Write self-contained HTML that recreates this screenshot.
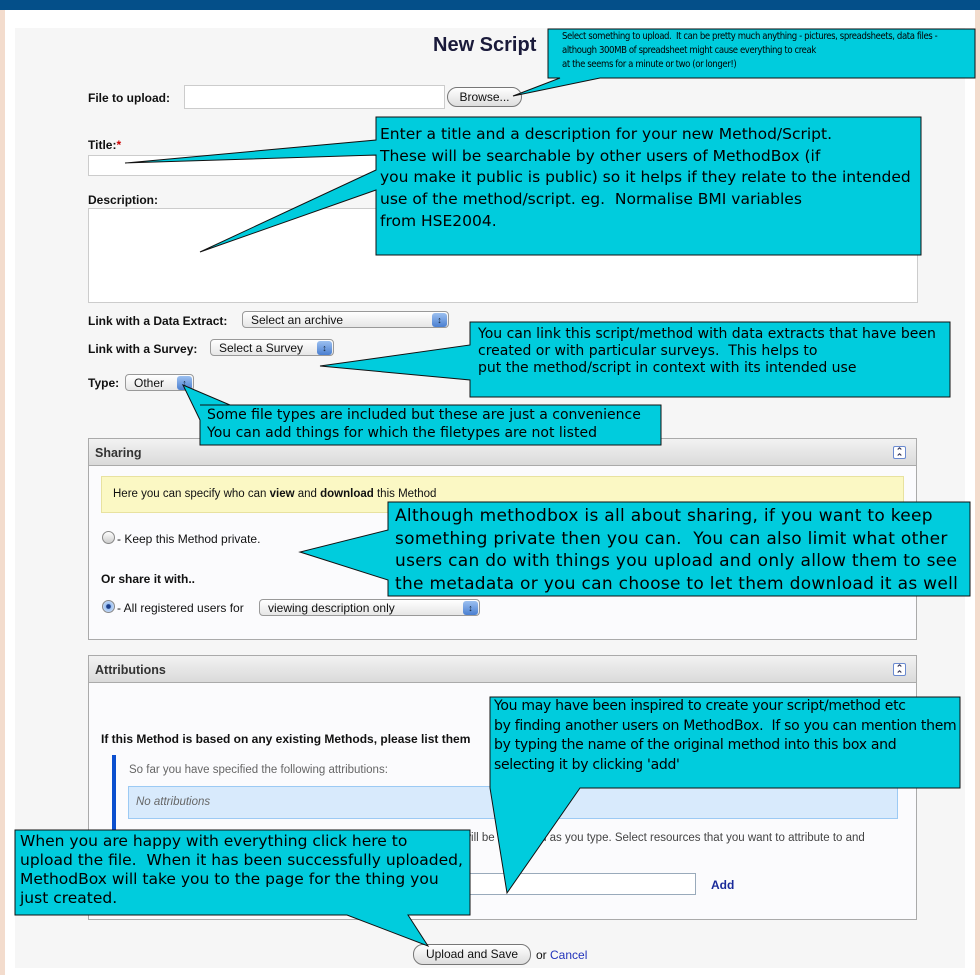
<!DOCTYPE html>
<html><head><meta charset="utf-8"><style>
*{margin:0;padding:0;box-sizing:border-box}
body{width:980px;height:975px;position:relative;overflow:hidden;background:#f3dccd;font-family:"Liberation Sans",Arial,sans-serif;font-size:12px;color:#111}
.a{position:absolute}
.inner{left:5px;top:0;width:970px;height:975px;background:#fff}
.bar{left:0;top:0;width:980px;height:10px;background:#044f89}
.page{left:15px;top:28px;width:950px;height:940px;background:#f6f6f6}
.lbl{font-weight:bold;font-size:12px}
.inp{background:#fff;border:1px solid #ccc}
.btn{border:1px solid #777;border-radius:10px;background:linear-gradient(#fff,#ddd);font-size:12px;text-align:center;line-height:18px}
.sel{border:1px solid #999;border-radius:4px;background:linear-gradient(#fff,#e6e6e6);font-size:12px;padding-left:8px;line-height:16px}
.sel:after{content:"\2195";position:absolute;right:1px;top:1px;width:15px;height:14px;background:linear-gradient(#9cc0f0,#4a7fd0);border-radius:3px;color:#123;font-size:9px;line-height:14px;text-align:center}
.panel{border:1px solid #aaa;background:#fbfbfd}
.ph{height:27px;background:linear-gradient(#f2f2f2,#dadada);border-bottom:1px solid #aaa;font-weight:bold;font-size:12.5px;color:#333;padding:7px 6px}
.tg{position:absolute;right:10px;top:7px;width:13px;height:13px;border:1px solid #6a8ad0;border-radius:2px;background:#fff;font-size:9px;line-height:6px;text-align:center;color:#335;padding-top:1px}
.radio{width:13px;height:13px;border-radius:50%;border:1px solid #888;background:linear-gradient(#fff,#ccc)}
.ct{font-family:"DejaVu Sans",sans-serif;color:#000}
</style></head><body>
<div class="a inner"></div>
<div class="a bar"></div>
<div class="a page"></div>

<div class="a" style="left:433px;top:34px;font-size:20px;font-weight:bold;color:#1a1a3a">New Script</div>

<div class="a lbl" style="left:88px;top:91px">File to upload:</div>
<div class="a inp" style="left:184px;top:85px;width:261px;height:24px"></div>
<div class="a btn" style="left:447px;top:87px;width:75px;height:20px">Browse...</div>

<div class="a lbl" style="left:88px;top:138px">Title:<span style="color:#c00">*</span></div>
<div class="a inp" style="left:88px;top:155px;width:830px;height:21px"></div>
<div class="a lbl" style="left:88px;top:193px">Description:</div>
<div class="a inp" style="left:88px;top:208px;width:830px;height:95px"></div>

<div class="a lbl" style="left:88px;top:314px">Link with a Data Extract:</div>
<div class="a sel" style="left:242px;top:311px;width:207px;height:17px">Select an archive</div>
<div class="a lbl" style="left:88px;top:342px">Link with a Survey:</div>
<div class="a sel" style="left:210px;top:339px;width:124px;height:17px">Select a Survey</div>
<div class="a lbl" style="left:88px;top:376px">Type:</div>
<div class="a sel" style="left:125px;top:374px;width:69px;height:17px">Other</div>

<div class="a panel" style="left:88px;top:438px;width:829px;height:202px">
 <div class="ph">Sharing<div class="tg">&#8963;<br>&#8963;</div></div>
 <div class="a" style="left:12px;top:37px;width:803px;height:37px;background:#fbf8c4;border:1px solid #e8e2a0;padding:11px 11px;font-size:11.5px">Here you can specify who can <b>view</b> and <b>download</b> this Method</div>
 <div class="a radio" style="left:13px;top:92px"></div>
 <div class="a" style="left:28px;top:93px;font-size:12px">- Keep this Method private.</div>
 <div class="a lbl" style="left:12px;top:133px">Or share it with..</div>
 <div class="a radio" style="left:13px;top:161px;background:radial-gradient(#1a3d8a 25%,#9cc0f0 35%,#e0ebfb)"></div>
 <div class="a" style="left:28px;top:162px;font-size:12px">- All registered users for</div>
 <div class="a sel" style="left:170px;top:160px;width:221px;height:17px">viewing description only</div>
</div>

<div class="a panel" style="left:88px;top:655px;width:829px;height:265px">
 <div class="ph">Attributions<div class="tg">&#8963;<br>&#8963;</div></div>
 <div class="a lbl" style="left:12px;top:76px">If this Method is based on any existing Methods, please list them</div>
 <div class="a" style="left:23px;top:99px;width:4px;height:110px;background:#0b4fcf"></div>
 <div class="a" style="left:40px;top:108px;color:#666;font-size:11.5px">So far you have specified the following attributions:</div>
 <div class="a" style="left:39px;top:130px;width:770px;height:33px;background:#d8eafc;border:1px solid #9ccaf4;padding:9px 7px;color:#666;font-style:italic;font-size:11.5px">No attributions</div>
 <div class="a" style="left:40px;top:176px;color:#444;font-size:11.5px">Please type the name of Method into the box below. Suggestions will be displayed as you type. Select resources that you want to attribute to and</div>
 <div class="a inp" style="left:40px;top:217px;width:567px;height:22px;border-color:#9ab"></div>
 <div class="a" style="left:622px;top:222px;font-weight:bold;color:#1a2a9a">Add</div>
</div>

<div class="a btn" style="left:413px;top:944px;width:118px;height:21px;line-height:19px">Upload and Save</div>
<div class="a" style="left:536px;top:948px">or <span style="color:#2233bb">Cancel</span></div>

<svg class="a" style="left:0;top:0" width="980" height="975">
<g fill="#00ccdd" stroke="#111" stroke-width="1">
<polygon points="548,29 975,29 975,78 600,78 513,96 560,78 548,78"/>
<polygon points="376,117 921,117 921,255 376,255 376,190 200,252 376,170 376,155 125,163 376,140"/>
<polygon points="470,322 950,322 950,397 470,397 470,380 320,366 470,345"/>
<polygon points="200,405 661,405 661,445 200,445 200,420 183,385 230,405"/>
<polygon points="388,502 970,502 970,596 388,596 388,580 300,552 388,530"/>
<polygon points="490,697 960,697 960,788 580,788 507,893 490,788"/>
<polygon points="15,830 470,830 470,915 408,915 428,946 347,915 15,915"/>
</g>
</svg>

<div class="a ct" style="left:562px;top:30px;font-size:9.5px;line-height:14px;letter-spacing:-0.4px;font-family:'Liberation Sans Narrow','DejaVu Sans Condensed',sans-serif;width:420px">Select something to upload.&nbsp; It can be pretty much anything - pictures, spreadsheets, data files -<br>although 300MB of spreadsheet might cause everything to creak<br>at the seems for a minute or two (or longer!)</div>
<div class="a ct" style="left:380px;top:124px;font-size:15.5px;line-height:21.7px">Enter a title and a description for your new Method/Script.<br>These will be searchable by other users of MethodBox (if<br>you make it public is public) so it helps if they relate to the intended<br>use of the method/script. eg.&nbsp; Normalise BMI variables<br>from HSE2004.</div>
<div class="a ct" style="left:478px;top:326px;font-size:14px;line-height:17px">You can link this script/method with data extracts that have been<br>created or with particular surveys.&nbsp; This helps to<br>put the method/script in context with its intended use</div>
<div class="a ct" style="left:207px;top:407px;font-size:14px;line-height:17.5px">Some file types are included but these are just a convenience<br>You can add things for which the filetypes are not listed</div>
<div class="a ct" style="left:395px;top:505px;font-size:17px;line-height:22.5px;letter-spacing:0.3px">Although methodbox is all about sharing, if you want to keep<br>something private then you can.&nbsp; You can also limit what other<br>users can do with things you upload and only allow them to see<br>the metadata or you can choose to let them download it as well</div>
<div class="a ct" style="left:494px;top:697px;font-size:14px;line-height:19.7px;letter-spacing:-0.3px">You may have been inspired to create your script/method etc<br>by finding another users on MethodBox.&nbsp; If so you can mention them<br>by typing the name of the original method into this box and<br>selecting it by clicking 'add'</div>
<div class="a ct" style="left:20px;top:832px;font-size:15.5px;line-height:19px">When you are happy with everything click here to<br>upload the file.&nbsp; When it has been successfully uploaded,<br>MethodBox will take you to the page for the thing you<br>just created.</div>
</body></html>
